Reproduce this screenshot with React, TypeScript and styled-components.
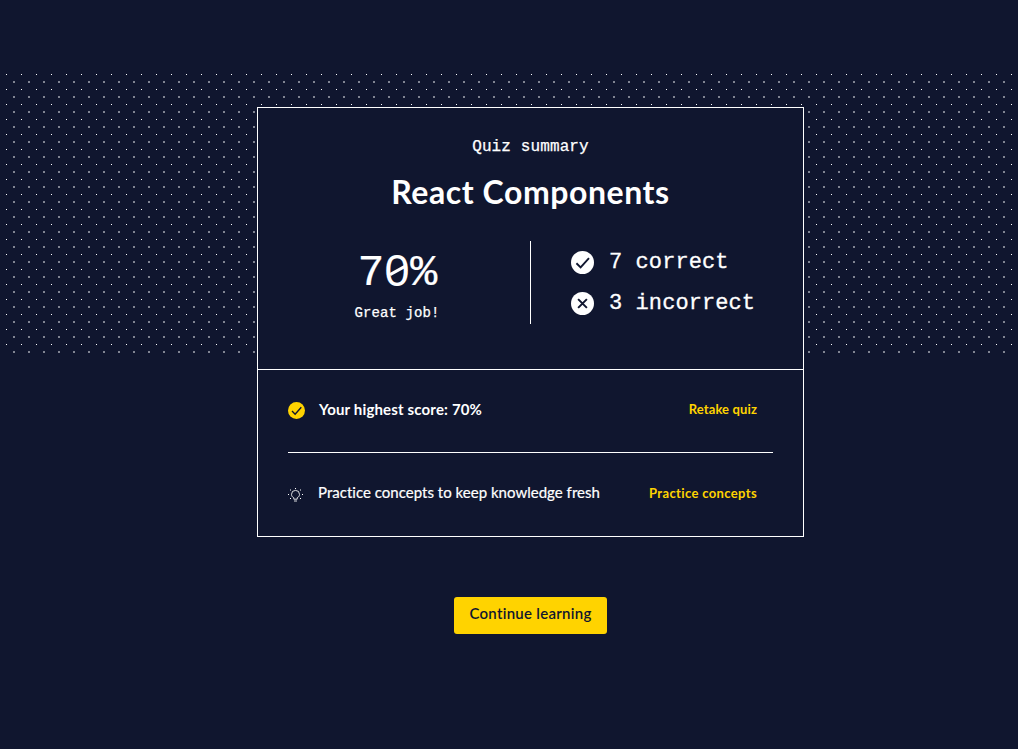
import React from 'react';
import styled, { createGlobalStyle, css } from 'styled-components';

const navy = '#10162f';
const yellow = '#ffd300';
const mono = "'Liberation Mono', monospace";
const sans = "Lato, 'Liberation Sans', sans-serif";

const GlobalStyle = createGlobalStyle`
  * { box-sizing: border-box; }
  body {
    margin: 0;
    background: ${navy};
    color: #fff;
    font-family: ${sans};
    font-variant-ligatures: none;
  }
  h1, p { margin: 0; }
`;

const Page = styled.main`
  position: relative;
  display: flex;
  flex-direction: column;
  align-items: center;
  width: 1018px;
  height: 749px;
  padding: 107px 0 0 43px;
  overflow: hidden;
`;

const DotSvg = styled.svg`
  position: absolute;
  top: 73px;
  left: 0;
  width: 1018px;
  height: 281px;
`;

const Card = styled.section`
  position: relative;
  width: 547px;
  height: 430px;
  border: 1px solid #fff;
  background: ${navy};
`;

const Summary = styled.header`
  display: flex;
  flex-direction: column;
  align-items: center;
  height: 262px;
  padding-top: 29px;
  border-bottom: 1px solid #fff;
`;

const Eyebrow = styled.p`
  font: 16px/20px ${mono};
  letter-spacing: 0.12px;
  -webkit-text-stroke: 0.25px #fff;
`;

const Title = styled.h1`
  margin-top: 14px;
  font: 700 32px/42px ${sans};
  font-variant-ligatures: none;
  letter-spacing: 0.56px;
  white-space: nowrap;
`;

const Results = styled.div`
  display: flex;
  align-self: stretch;
  height: 83px;
  margin-top: 28px;
`;

const Score = styled.div`
  display: flex;
  flex-direction: column;
  align-items: center;
  width: 273px;
  padding: 8px 0 0 6px;
  border-right: 1px solid #fff;
`;

const Percent = styled.p`
  display: flex;
  height: 50px;
  font: 45px/50px ${mono};
  letter-spacing: -0.6px;
  -webkit-text-stroke: 0.2px #fff;
`;

const Zero = styled.span`
  position: relative;
  width: 26.4px;
  margin-top: -3px;
  font-family: 'Liberation Sans', sans-serif;
  letter-spacing: 0;
  text-align: center;
  -webkit-text-stroke: 0;
  &::after {
    content: '';
    position: absolute;
    left: 5px;
    top: 23px;
    width: 17px;
    height: 3px;
    background: #fff;
    transform: rotate(-29deg);
  }
`;

const Praise = styled.p`
  margin-top: 5px;
  font: 14px/18px ${mono};
  letter-spacing: 0.12px;
  -webkit-text-stroke: 0.25px #fff;
`;

const Tally = styled.div`
  display: flex;
  flex-direction: column;
  gap: 13px;
  padding: 7px 0 0 40px;
`;

const TallyRow = styled.div`
  display: flex;
  align-items: center;
  gap: 15px;
  height: 28px;
  font: 22px/28px ${mono};
  letter-spacing: 0.08px;
  white-space: nowrap;
  -webkit-text-stroke: 0.3px #fff;
  svg { flex: none; }
  span { padding-top: 2px; }
`;

const Actions = styled.div`
  padding: 0 30px;
`;

const ActionRow = styled.div<{ $divided?: boolean }>`
  display: flex;
  align-items: center;
  height: ${p => (p.$divided ? 83 : 82)}px;
  padding-right: 16px;
  ${p => p.$divided && css`border-bottom: 1px solid #fff;`}
  svg { flex: none; margin-top: ${p => (p.$divided ? -1 : 3)}px; }
`;

const Label = styled.span<{ $bold?: boolean }>`
  flex: 1;
  margin-left: ${p => (p.$bold ? 14 : 15)}px;
  padding-bottom: 5px;
  font: ${p => (p.$bold ? 700 : 400)} 15px/20px ${sans};
  font-variant-ligatures: none;
  letter-spacing: ${p => (p.$bold ? '0.16px' : '0.02px')};
  -webkit-text-stroke: ${p => (p.$bold ? 0 : 0.2)}px #fff;
  white-space: nowrap;
`;

const TextLink = styled.a<{ $spacing: number; $lift: number }>`
  padding-bottom: ${p => p.$lift}px;
  color: ${yellow};
  font: 700 13px/20px ${sans};
  font-variant-ligatures: none;
  letter-spacing: ${p => p.$spacing}px;
  white-space: nowrap;
`;

const Button = styled.button`
  width: 153px;
  height: 37px;
  margin-top: 60px;
  padding: 0 0 5px;
  border: 0;
  border-radius: 3px;
  background: ${yellow};
  color: ${navy};
  font: 600 15px/20px ${sans};
  font-variant-ligatures: none;
  letter-spacing: 0.27px;
  white-space: nowrap;
`;

const Badge = ({ size, color, cross }: { size: number; color: string; cross?: boolean }) => (
  <svg width={size} height={size} viewBox="0 0 22 22" fill="none">
    <circle cx="11" cy="11" r="11" fill={color} />
    <path
      d={cross ? 'M6.8 6.8l8.4 8.4M15.2 6.8l-8.4 8.4' : 'M5.2 11.7l4 4L17.2 6.8'}
      stroke={navy}
      strokeWidth={cross ? 1.9 : 1.8}
    />
  </svg>
);

const Bulb = () => (
  <svg width="15" height="17" viewBox="0 0 15 17" fill="none" stroke="#fff" strokeWidth="1">
    <path d="M5.8 12.2v-1.4C4.2 10 3.5 8.8 3.5 7.4a4 4 0 018 0c0 1.4-.7 2.6-2.3 3.4v1.4zM6 14h3" opacity=".85" />
    <path d="M7 1.5h1M2 3h1M12 3h1M0 7.5h1M14 7.5h1M2 11.5h1M12 11.5h1" />
  </svg>
);

const Dots = () => (
  <DotSvg shapeRendering="crispEdges" aria-hidden="true">
    <defs>
      <pattern id="dots" width="15" height="15" patternUnits="userSpaceOnUse">
        <rect x="6" y="1" width="1" height="1" fill="#fff" />
        <rect x="13" y="8" width="2" height="2" fill="#808492" />
      </pattern>
    </defs>
    <rect width="1018" height="281" fill="url(#dots)" />
  </DotSvg>
);

export default function App() {
  return (
    <>
      <GlobalStyle />
      <Page>
        <Dots />
        <Card>
          <Summary>
            <Eyebrow>Quiz summary</Eyebrow>
            <Title>React Components</Title>
            <Results>
              <Score>
                <Percent>7<Zero>0</Zero>%</Percent>
                <Praise>Great job!</Praise>
              </Score>
              <Tally>
                <TallyRow><Badge size={23} color="#fff" /><span>7 correct</span></TallyRow>
                <TallyRow><Badge size={23} color="#fff" cross /><span>3 incorrect</span></TallyRow>
              </Tally>
            </Results>
          </Summary>
          <Actions>
            <ActionRow $divided>
              <Badge size={17} color={yellow} />
              <Label $bold>Your highest score: 70%</Label>
              <TextLink $spacing={0.13} $lift={5}>Retake quiz</TextLink>
            </ActionRow>
            <ActionRow>
              <Bulb />
              <Label>Practice concepts to keep knowledge fresh</Label>
              <TextLink $spacing={0.36} $lift={3}>Practice concepts</TextLink>
            </ActionRow>
          </Actions>
        </Card>
        <Button>Continue learning</Button>
      </Page>
    </>
  );
}
